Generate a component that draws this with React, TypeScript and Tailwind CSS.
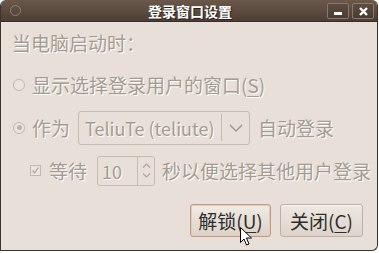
import React from "react";

const dis = "text-[#a59b90] [text-shadow:1px_1px_0_#ffffff]";

function Radio({ checked }: { checked?: boolean }) {
  return (
    <div className="w-[12px] h-[12px] rounded-full border border-[#c2b8ad] bg-[#ebe4dd] flex items-center justify-center">
      {checked && <div className="w-[5px] h-[5px] rounded-full bg-[#bdb2a6]" />}
    </div>
  );
}

export default function App() {
  return (
    <div className="w-[379px] h-[253px] bg-white overflow-hidden relative">
      <div className="w-[378px] h-[251px] bg-[#e7dfd8] rounded-t-[6px] rounded-br-[6px] border-x border-b border-[#3e322a] flex flex-col overflow-hidden [font-family:'Noto_Sans_CJK_SC','Noto_Sans',sans-serif]">
        {/* title bar */}
        <div className="h-[22px] shrink-0 bg-gradient-to-b from-[#6b584b] to-[#4c3e35] border-b border-[#3a2e27] flex items-center relative">
          <div className="absolute left-[9px] top-[5px] w-[11px] h-[11px] rounded-full border border-[#8e8076]" />
          <div className="flex-1 text-center text-white font-bold text-[14px] leading-none [text-shadow:1px_1px_0_#2a201a] pl-[2px]">
            登录窗口设置
          </div>
          <div className="absolute right-[3px] top-[3px] flex gap-[3px]">
            <div className="w-[22px] h-[16px] rounded-[2px] border border-[#8c796b] bg-gradient-to-b from-[#5e4c40] to-[#4a3c33] flex items-center justify-center">
              <div className="w-[8px] h-[3px] bg-white mt-[5px]" />
            </div>
            <div className="w-[22px] h-[16px] rounded-[2px] border border-[#8c796b] bg-gradient-to-b from-[#5e4c40] to-[#4a3c33] flex items-center justify-center">
              <svg width="9" height="9" viewBox="0 0 9 9">
                <path d="M1 1 L8 8 M8 1 L1 8" stroke="#ffffff" strokeWidth="2.4" />
              </svg>
            </div>
          </div>
        </div>

        {/* content */}
        <div className="flex flex-col text-[19px] leading-none">
          <div className={`h-[41px] flex items-center pl-[11px] ${dis}`}>当电脑启动时：</div>
          <div className="h-[43px] flex items-center pl-[12px]">
            <Radio />
            <span className={`ml-[7px] ${dis}`}>
              显示选择登录用户的窗口(<span className="underline underline-offset-[3px]">S</span>)
            </span>
          </div>
          <div className="h-[43px] flex items-center pl-[12px]">
            <Radio checked />
            <span className={`ml-[7px] ${dis}`}>作为</span>
            <div className="ml-[8px] w-[172px] h-[34px] border border-[#c6bbaf] rounded-[3px] flex items-center">
              <span className={`pl-[6px] flex-1 text-[18px] ${dis}`}>TeliuTe (teliute)</span>
              <div className="w-px h-[27px] bg-[#c6bbaf]" />
              <div className="w-[27px] flex items-center justify-center">
                <svg width="14" height="8" viewBox="0 0 14 8">
                  <path d="M1 1 L7 7 L13 1" fill="none" stroke="#a8998b" strokeWidth="1.5" />
                </svg>
              </div>
            </div>
            <span className={`ml-[8px] ${dis}`}>自动登录</span>
          </div>
          <div className="h-[43px] flex items-center pl-[29px]">
            <div className="w-[11px] h-[11px] border border-[#c2b8ad] bg-[#ebe4dd] flex items-center justify-center">
              <svg width="9" height="9" viewBox="0 0 9 9">
                <path d="M1.5 4.5 L3.5 7 L7.5 1.5" fill="none" stroke="#b9aea2" strokeWidth="1.3" />
              </svg>
            </div>
            <span className={`ml-[8px] ${dis}`}>等待</span>
            <div className="ml-[10px] w-[58px] h-[30px] border border-[#c6bbaf] rounded-[3px] flex items-center">
              <span className={`pl-[4px] w-[39px] text-[18px] ${dis}`}>10</span>
              <div className="w-px h-full bg-[#c6bbaf]" />
              <div className="flex-1 flex flex-col items-center justify-center gap-[5px]">
                <svg width="9" height="5" viewBox="0 0 9 5">
                  <path d="M1 4.5 L4.5 1 L8 4.5" fill="none" stroke="#b3a698" strokeWidth="1.2" />
                </svg>
                <svg width="9" height="5" viewBox="0 0 9 5">
                  <path d="M1 0.5 L4.5 4 L8 0.5" fill="none" stroke="#b3a698" strokeWidth="1.2" />
                </svg>
              </div>
            </div>
            <span className={`ml-[7px] ${dis}`}>秒以便选择其他用户登录</span>
          </div>

          <div className="flex justify-end gap-[9px] pr-[14px] mt-[12px]">
            <div className="w-[81px] h-[33px] rounded-[3px] border border-[#b99c8b] bg-gradient-to-b from-[#f1ebe5] to-[#ddd2c8] shadow-[inset_0_0_0_1px_#e9c9b4] flex items-center justify-center text-[#2e2e2e]">
              解锁(<span className="underline underline-offset-[3px]">U</span>)
            </div>
            <div className="w-[83px] h-[33px] rounded-[3px] border border-[#bdb1a5] bg-gradient-to-b from-[#eee8e2] to-[#ddd4cb] shadow-[inset_0_1px_0_#f8f5f2] flex items-center justify-center text-[#2e2e2e]">
              关闭(<span className="underline underline-offset-[3px]">C</span>)
            </div>
          </div>
        </div>
      </div>
      {/* mouse cursor */}
      <svg className="absolute left-[240px] top-[227px]" width="13" height="20" viewBox="0 0 13 20">
        <path d="M0.5 0.5 L0.5 15.5 L4 12 L6.5 18 L9 17 L6.5 11 L11.5 11 Z" fill="#ffffff" stroke="#000000" strokeWidth="1" strokeLinejoin="round" />
      </svg>
    </div>
  );
}
